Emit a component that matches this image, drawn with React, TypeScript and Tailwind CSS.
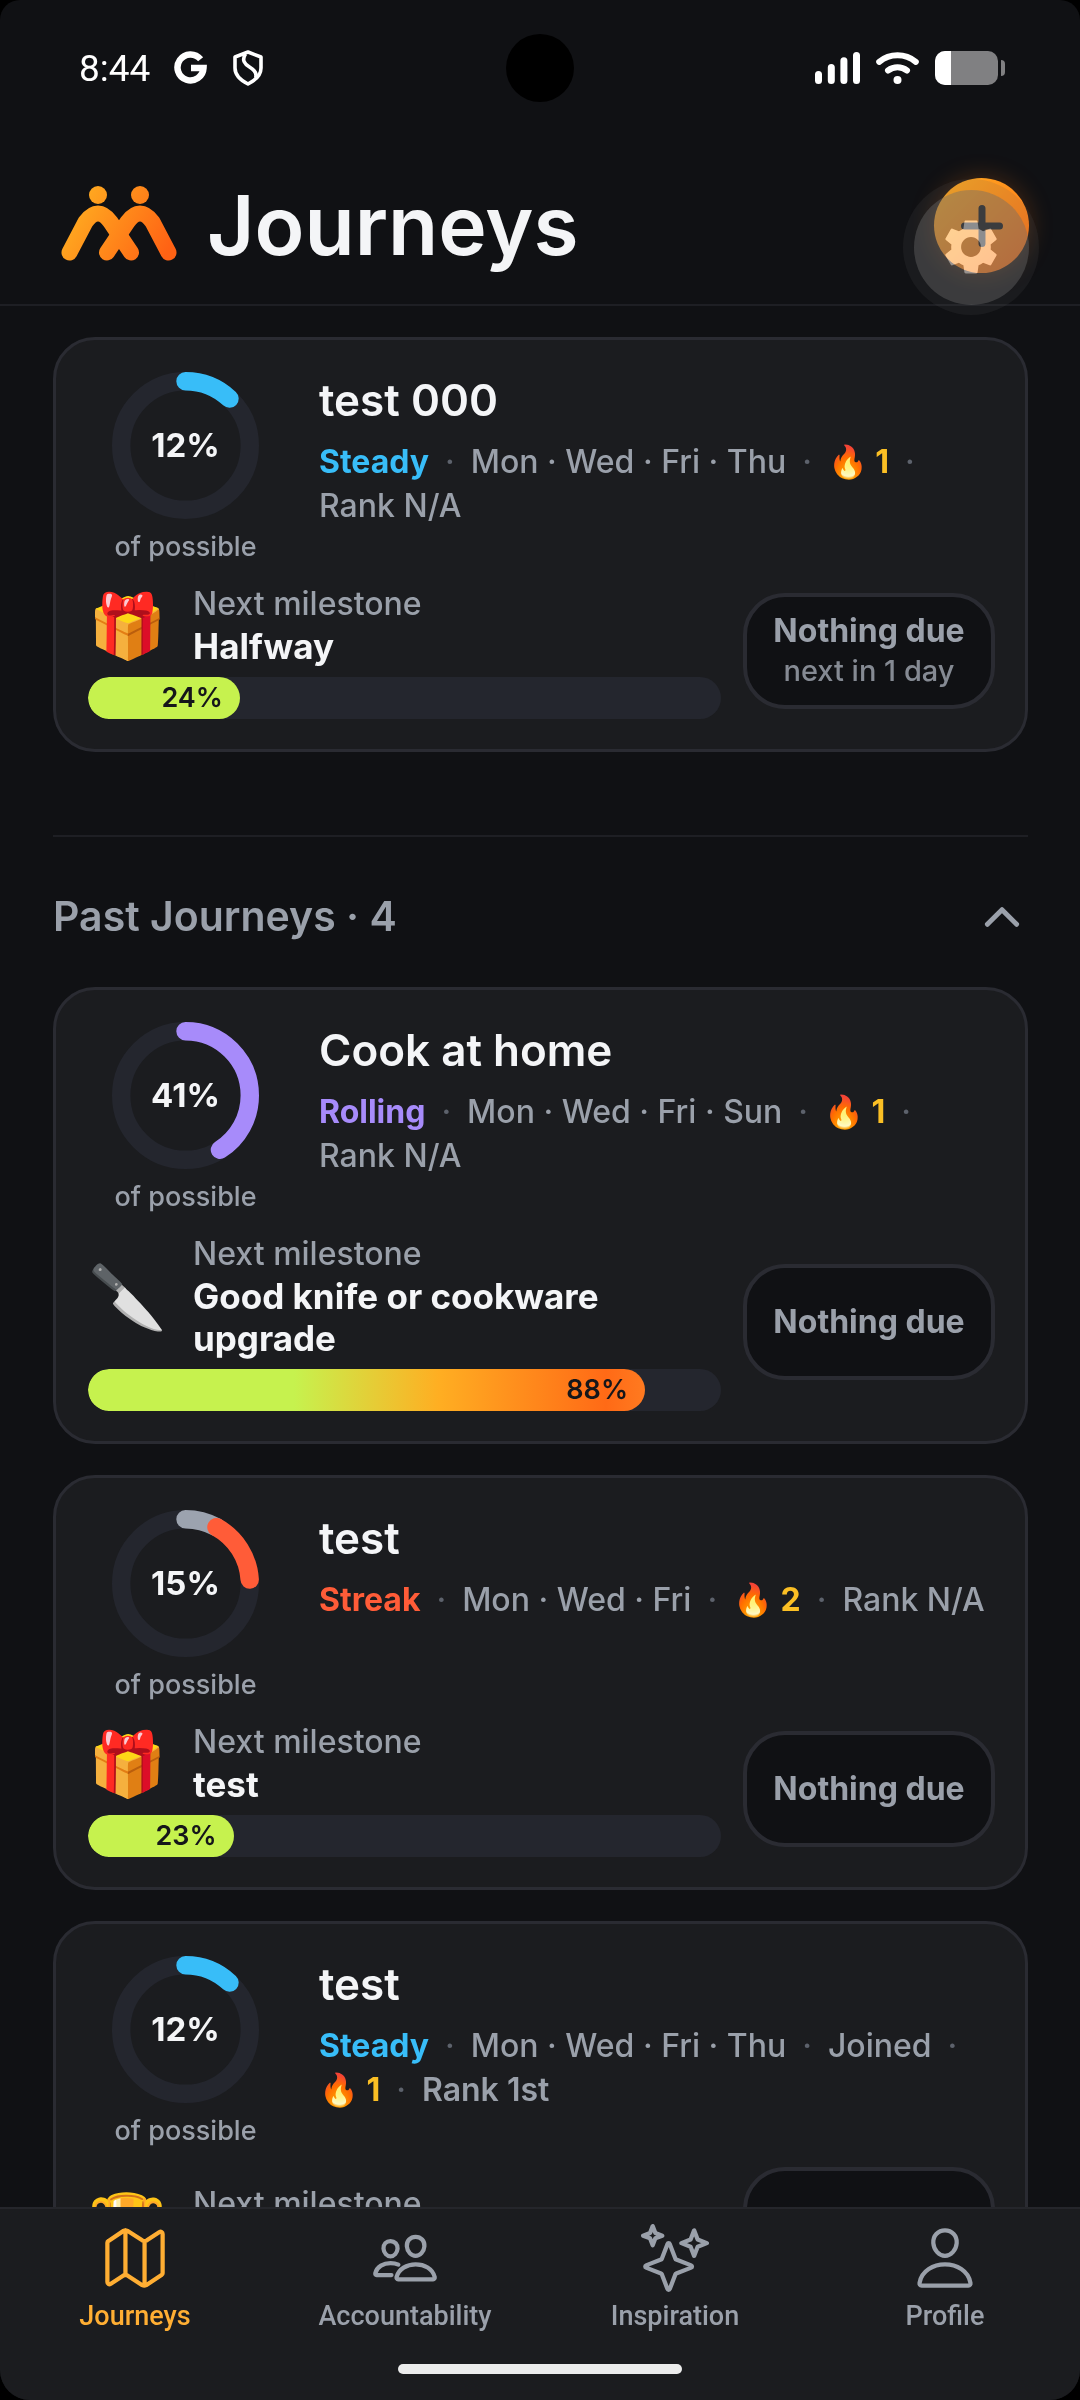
import React, { useState } from "react";
import { IoMapOutline, IoPeopleOutline, IoSparklesOutline, IoPersonOutline, IoChevronUp } from "react-icons/io5";
import { MdSettings } from "react-icons/md";
import clsx from "clsx";

type Segment = { color: string; from: number; to: number };

type Journey = {
  id: number;
  title: string;
  percent: string;
  segments: Segment[];
  mode: string;
  modeClass: string;
  days: string;
  joined?: boolean;
  streak: number;
  rank: string;
  ranked?: boolean;
  emoji: string;
  milestone: string;
  progress: number;
  next?: string;
  tallAction?: boolean;
};

const active: Journey = {
  id: 1, title: "test 000", percent: "12%",
  segments: [{ color: "#38bdf8", from: 0, to: 12 }],
  mode: "Steady", modeClass: "text-[#38bdf8]", days: "Mon · Wed · Fri · Thu",
  streak: 1, rank: "Rank N/A", emoji: "🎁", milestone: "Halfway", progress: 24,
  next: "next in 1 day",
};

const past: Journey[] = [
  {
    id: 2, title: "Cook at home", percent: "41%",
    segments: [{ color: "#a78bfa", from: 0, to: 41 }],
    mode: "Rolling", modeClass: "text-[#a78bfa]", days: "Mon · Wed · Fri · Sun",
    streak: 1, rank: "Rank N/A", emoji: "🔪", milestone: "Good knife or cookware upgrade", progress: 88,
  },
  {
    id: 3, title: "test", percent: "15%",
    segments: [
      { color: "#9ca3af", from: 0, to: 8 },
      { color: "#ff5c38", from: 8, to: 24 },
    ],
    mode: "Streak", modeClass: "text-[#ff5c38]", days: "Mon · Wed · Fri",
    streak: 2, rank: "Rank N/A", emoji: "🎁", milestone: "test", progress: 23,
  },
  {
    id: 4, title: "test", percent: "12%",
    segments: [{ color: "#38bdf8", from: 0, to: 12 }],
    mode: "Steady", modeClass: "text-[#38bdf8]", days: "Mon · Wed · Fri · Thu",
    joined: true, streak: 1, rank: "Rank 1st", ranked: true, emoji: "🏆", milestone: "test", progress: 24,
    tallAction: true,
  },
];

const tabs = [
  { label: "Journeys", icon: IoMapOutline },
  { label: "Accountability", icon: IoPeopleOutline },
  { label: "Inspiration", icon: IoSparklesOutline },
  { label: "Profile", icon: IoPersonOutline },
];

function StatusBar() {
  return (
    <div className="relative flex h-34 items-center justify-between pl-[79px] pr-[75px]">
      <div className="flex items-center gap-6 text-white">
        <span className="font-[Roboto] text-[37px] leading-none">8:44</span>
        <svg className="h-[34px] w-[34px]" viewBox="0 0 34 34" fill="none" stroke="currentColor" strokeWidth="6.5">
          <path d="M26.600 8.200A13 13 0 1 0 29.500 17H17" />
        </svg>
        <svg className="h-9 w-8" viewBox="0 0 32 36" fill="none" stroke="currentColor" strokeWidth="3.6" strokeLinejoin="round">
          <path d="M16 2 29 7v11c0 7-5 12-13 16C8 30 3 25 3 18V7z" />
          <path d="M13.500 4c-4 6-1 10 4 13s8 6 6 11" />
        </svg>
      </div>
      <div className="absolute left-1/2 top-[34px] h-17 w-17 -translate-x-1/2 rounded-full bg-black" />
      <div className="flex items-center gap-4">
        <svg className="h-8 w-[45px]" viewBox="0 0 45 32" stroke="#fff" strokeWidth="7" strokeLinecap="round">
          <path d="M3.500 22.500v6M16.300 15.500v13M28.900 8.700v19.800M41.500 3.500v25" />
        </svg>
        <svg className="h-8 w-[43px]" viewBox="0 0 43 32" fill="none" stroke="#fff" strokeWidth="6" strokeLinecap="round">
          <path d="M3.200 9.800a29 29 0 0 1 36.600 0M12 18.500a16 16 0 0 1 19 0" />
          <circle cx="21.500" cy="28" r="4" fill="#fff" stroke="none" />
        </svg>
        <svg className="h-[34px] w-[70px]" viewBox="0 0 70 34">
          <rect width="63" height="34" rx="10" fill="#808082" />
          <path d="M10 0h6v34h-6A10 10 0 0 1 0 24V10A10 10 0 0 1 10 0z" fill="#fff" />
          <path d="M66 9q4 0 4 4v8q0 4-4 4z" fill="#808082" />
        </svg>
      </div>
    </div>
  );
}

function Logo() {
  return (
    <svg className="h-20 w-[116px]" viewBox="0 0 116 80">
      <defs>
        <linearGradient id="warm" gradientUnits="userSpaceOnUse" x1="10" y1="10" x2="106" y2="66">
          <stop offset="0" stopColor="#ffb021" />
          <stop offset="1" stopColor="#ff6214" />
        </linearGradient>
      </defs>
      <g fill="url(#warm)">
        <circle cx="37" cy="9" r="9" />
        <circle cx="79" cy="9" r="9" />
      </g>
      <g fill="none" stroke="url(#warm)" strokeWidth="16" strokeLinecap="round" strokeLinejoin="round">
        <path d="M46 66.500 66.500 36q12.500-17 25 0L107.500 66.500" />
        <path d="M8.500 66.500 24.500 36q12.500-17 25 0L70 66.500" />
      </g>
    </svg>
  );
}

function Header() {
  return (
    <header className="border-b-2 border-[#1e1f24]">
      <StatusBar />
      <div className="relative flex h-[168px] items-center pl-[61px] pr-[51px] pt-[11px]">
        <div className="flex items-center gap-[30px]">
          <Logo />
          <h1 className="text-[82px] font-semibold leading-none text-[#f4f5f7]">Journeys</h1>
        </div>
        <button
          aria-label="New journey"
          className="ml-auto flex h-[95px] w-[95px] items-center justify-center rounded-full bg-linear-135 from-[#ffae22] to-[#ff6a16] shadow-[0_0_24px_rgba(255,122,24,0.25)]"
        >
          <svg className="h-[42px] w-[42px]" viewBox="0 0 42 42" stroke="#111216" strokeWidth="7" strokeLinecap="round">
            <path d="M21 3.500v35M3.500 21h35" />
          </svg>
        </button>
        {/* floating dev settings bubble */}
        <button
          aria-label="Settings"
          className="absolute right-[41px] top-[43px] flex h-[136px] w-[136px] items-center justify-center rounded-full bg-[rgba(95,95,95,0.14)]"
        >
          <span className="flex h-[115px] w-[115px] items-center justify-center rounded-full bg-[rgba(108,108,108,0.41)]" />
        </button>
        <MdSettings className="pointer-events-none absolute right-[76px] top-[78px] h-[66px] w-[66px] text-[#515151] mix-blend-plus-lighter" />
      </div>
    </header>
  );
}

function Ring({ percent, segments }: { percent: string; segments: Segment[] }) {
  return (
    <div className="relative h-[147px] w-[147px]">
      <svg className="h-full w-full -rotate-90" viewBox="0 0 147 147" fill="none" strokeWidth="18.4">
        <circle cx="73.5" cy="73.5" r="64.3" stroke="#24262e" />
        {segments.map((s) => (
          <circle
            key={s.color}
            cx="73.5"
            cy="73.5"
            r="64.3"
            stroke={s.color}
            strokeLinecap="round"
            pathLength={100}
            strokeDasharray={`${s.to - s.from} 100`}
            strokeDashoffset={-s.from}
          />
        ))}
      </svg>
      <span className="absolute inset-0 flex items-center justify-center text-[33px] font-bold text-[#f4f5f7]">
        {percent}
      </span>
    </div>
  );
}

const Dot = () => <span className="text-[#5d626c]">·</span>;

function ProgressBar({ value }: { value: number }) {
  return (
    <div className="h-[42px] overflow-hidden rounded-full bg-[#24262e]">
      <div
        className={clsx(
          "flex h-full items-center justify-end rounded-full pr-[17px] text-[27px] font-semibold text-[#15161a]",
          value > 50
            ? "bg-[linear-gradient(90deg,#c6f24e_0%,#c6f24e_37%,#ffae22_63%,#ff6a16_93%,#ff7a20_100%)]"
            : "bg-[#c6f24e]"
        )}
        style={{ width: `${value}%` }}
      >
        {value}%
      </div>
    </div>
  );
}

function JourneyCard({ journey: j }: { journey: Journey }) {
  return (
    <article className="rounded-[42px] border-3 border-[#2a2b32] bg-[#1b1c1f] pb-[30px] pl-8 pr-[30px] pt-8">
      <div className="flex h-[211px] gap-9">
        <div className="flex w-[195px] shrink-0 flex-col items-center">
          <Ring percent={j.percent} segments={j.segments} />
          <span className="mt-2.5 text-[27px] font-medium leading-9 text-[#9aa0aa]">of possible</span>
        </div>
        <div className="min-w-0 flex-1">
          <h3 className="text-[44px] font-semibold leading-14 text-[#f4f5f7]">{j.title}</h3>
          <div className="mt-3 flex flex-wrap gap-x-4 text-[32px] font-medium leading-11 text-[#9aa0aa]">
            <span className={clsx("font-bold", j.modeClass)}>{j.mode}</span>
            <Dot />
            <span>{j.days}</span>
            <Dot />
            {j.joined && (
              <>
                <span>Joined</span>
                <Dot />
              </>
            )}
            <span className="font-bold text-[#fbbf24]">🔥 {j.streak}</span>
            <Dot />
            <span className={clsx(j.ranked && "font-semibold")}>{j.rank}</span>
          </div>
        </div>
      </div>
      <div className="flex items-center gap-[22px]">
        <div className="min-w-0 flex-1">
          <div className="mb-2.5 flex items-center">
            <span className="w-[105px] shrink-0 text-[63px] leading-none">{j.emoji}</span>
            <div className="min-w-0 leading-[42px]">
              <p className="text-[32px] font-medium text-[#9aa0aa]">Next milestone</p>
              <p className="text-[35px] font-bold text-[#f4f5f7]">{j.milestone}</p>
            </div>
          </div>
          <ProgressBar value={j.progress} />
        </div>
        <button
          className={clsx(
            "w-[252px] shrink-0 rounded-[42px] border-4 border-[#2a2b32] bg-[#101114] text-[#9aa0aa]",
            j.tallAction ? "h-42" : "h-29"
          )}
        >
          <span className="block text-[32px] font-bold leading-10">Nothing due</span>
          {j.next && <span className="block text-[29px] font-medium leading-10 opacity-85">{j.next}</span>}
        </button>
      </div>
    </article>
  );
}

function TabBar() {
  const [current, setCurrent] = useState("Journeys");

  return (
    <nav className="shrink-0 border-t-2 border-[#25262b] bg-[#1b1c1f] pb-[26px]">
      <div className="grid grid-cols-4 pt-[15px]">
        {tabs.map(({ label, icon: Icon }) => (
          <button
            key={label}
            onClick={() => setCurrent(label)}
            className={clsx(
              "flex flex-col items-center gap-1.5 font-[Roboto] text-[27px] font-medium leading-9",
              current === label ? "text-[#ffae33]" : "text-[#9aa0aa]"
            )}
          >
            <Icon className="h-17 w-17" />
            {label}
          </button>
        ))}
      </div>
      <div className="mx-auto mt-[30px] h-2.5 w-[284px] rounded-full bg-[#ececec]" />
    </nav>
  );
}

export default function App() {
  const [open, setOpen] = useState(true);

  return (
    <div className="h-screen bg-black">
      <div className="flex h-full flex-col overflow-hidden rounded-t-[20px] rounded-b-[30px] bg-[#101114] font-[Inter,'Noto_Color_Emoji',sans-serif]">
        <Header />
        <main className="min-h-0 flex-1 overflow-hidden pl-[53px] pr-[52px] pt-[31px]">
          <JourneyCard journey={active} />
          <section className="mt-[83px] border-t-2 border-[#1e1f24]">
            <button
              aria-expanded={open}
              onClick={() => setOpen(!open)}
              className="flex h-[150px] w-full items-center justify-between pt-2.5 text-[#9aa0aa]"
            >
              <h2 className="text-[41px] font-semibold">Past Journeys · 4</h2>
              <IoChevronUp className={clsx("h-13 w-13", !open && "rotate-180")} />
            </button>
            {open && (
              <div className="flex flex-col gap-[31px]">
                {past.map((j) => (
                  <JourneyCard key={j.id} journey={j} />
                ))}
              </div>
            )}
          </section>
        </main>
        <TabBar />
      </div>
    </div>
  );
}
